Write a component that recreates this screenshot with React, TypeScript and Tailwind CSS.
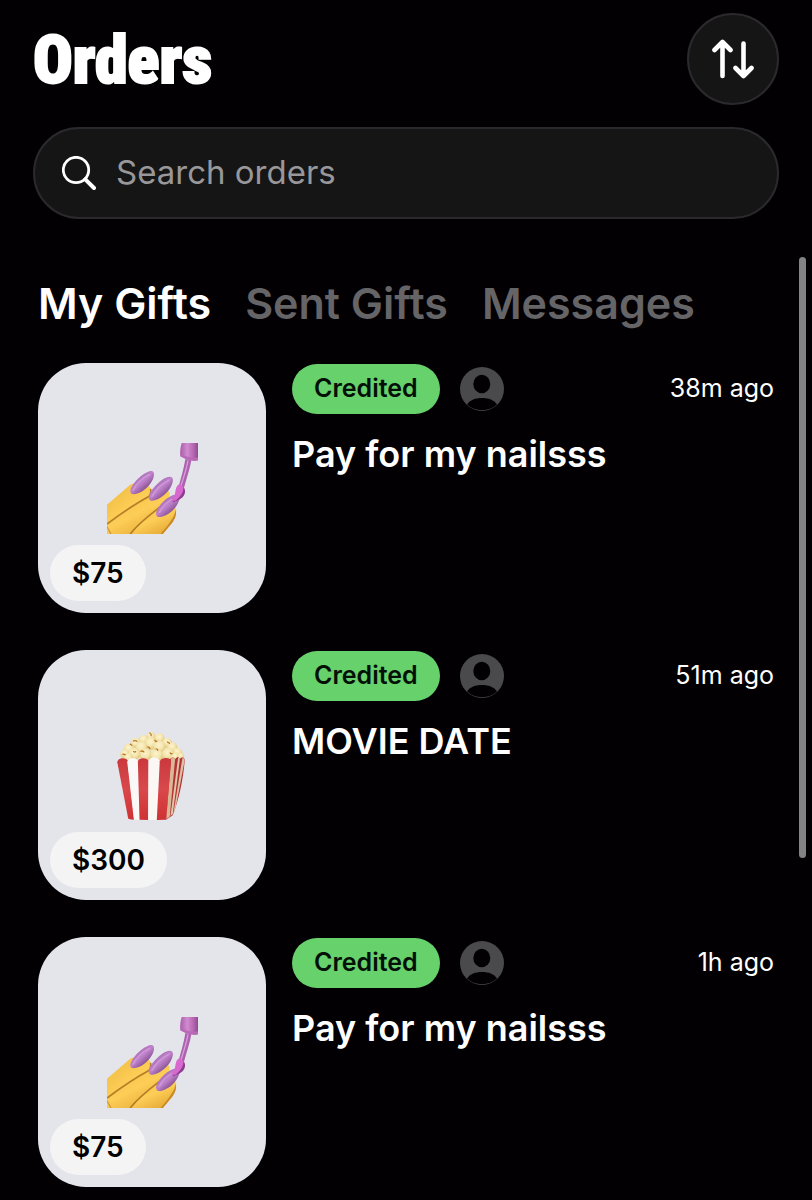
import { useState } from 'react'

type Order = {
  id: number
  title: string
  price: string
  time: string
  gift: 'nails' | 'popcorn'
}

const orders: Order[] = [
  { id: 1, title: 'Pay for my nailsss', price: '$75', time: '38m ago', gift: 'nails' },
  { id: 2, title: 'MOVIE DATE', price: '$300', time: '51m ago', gift: 'popcorn' },
  { id: 3, title: 'Pay for my nailsss', price: '$75', time: '1h ago', gift: 'nails' },
]

const tabs = ['My Gifts', 'Sent Gifts', 'Messages']

function SortIcon() {
  return (
    <svg
      viewBox="0 0 42 40"
      className="w-[42px] h-10"
      fill="none"
      stroke="currentColor"
      strokeWidth="4.6"
      strokeLinecap="round"
      strokeLinejoin="round"
      aria-hidden="true"
    >
      <path d="M10.500 37V3M2.500 11L10.500 3L18.500 11" />
      <path d="M31.500 4.500V37M23.500 29L31.500 37L39.500 29" />
    </svg>
  )
}

function SearchIcon() {
  return (
    <svg
      viewBox="0 0 34 34"
      className="w-[34px] h-[34px] shrink-0"
      fill="none"
      stroke="currentColor"
      strokeLinecap="round"
      aria-hidden="true"
    >
      <circle cx="14" cy="14" r="12.700" strokeWidth="2.800" />
      <path d="M23.300 23.300L32 32" strokeWidth="4" />
    </svg>
  )
}

function Avatar() {
  return (
    <svg viewBox="0 0 44 44" className="w-11 h-11 shrink-0" role="img" aria-label="Sender">
      <circle cx="22" cy="22" r="22" fill="#4a494c" />
      <ellipse cx="21.800" cy="17" rx="8.500" ry="9.200" fill="#020003" />
      <path d="M7 37.500C10 33 15.500 31 22 31S34 33 37 37.500C33 41.300 28 43.200 22 43.200S11 41.300 7 37.500Z" fill="#020003" />
    </svg>
  )
}

function NailsIcon() {
  return (
    <svg viewBox="48 42 274 274" className="w-[91px] h-[91px]" role="img" aria-label="Nail polish">
      <defs>
        <linearGradient id="skin" x1="0.200" y1="0.200" x2="0.700" y2="0.900">
          <stop offset="0" stopColor="#f3c148" />
          <stop offset="0.500" stopColor="#fdce57" />
          <stop offset="1" stopColor="#eab03c" />
        </linearGradient>
        <linearGradient id="nail" x1="0.250" y1="0.250" x2="0.750" y2="0.800">
          <stop offset="0" stopColor="#a96cb6" />
          <stop offset="0.450" stopColor="#bf82cb" />
          <stop offset="1" stopColor="#7a4585" />
        </linearGradient>
        <linearGradient id="cap" x1="0" y1="0" x2="1" y2="0">
          <stop offset="0" stopColor="#a95da8" />
          <stop offset="0.400" stopColor="#d18bd0" />
          <stop offset="0.750" stopColor="#b565b1" />
          <stop offset="1" stopColor="#8f4a90" />
        </linearGradient>
      </defs>
      {/* fingers */}
      <path d="M48 228L118 168C135 158 172 162 179 178C182 195 172 206 160 218L62 316H48Z" fill="url(#skin)" />
      <path d="M48 288L174 200C190 182 228 178 236 190C239 208 229 222 216 234L120 316H48Z" fill="url(#skin)" />
      <path d="M118 316L203 231C225 220 252 228 256 241C259 258 248 274 238 290L216 316Z" fill="url(#skin)" />
      <path d="M48 286C80 262 120 232 174 203C180 196 181 188 179 180" stroke="#a8701f" strokeWidth="5" fill="none" opacity="0.850" />
      <path d="M48 294L60 316" stroke="#b77920" strokeWidth="4" opacity="0.600" />
      <path d="M118 316C140 288 172 262 206 236" stroke="#a8701f" strokeWidth="5" fill="none" opacity="0.850" />
      <path d="M216 316L238 290C250 276 259 262 255 242C252 262 237 284 209 316Z" fill="#c98a25" />
      {/* nails */}
      <path d="M119 192C114 176 145 140 169 130C184 123 192 127 189 142C185 163 161 188 139 194C130 197 121 197 119 192Z" fill="url(#nail)" />
      <path d="M175 211C168 196 200 159 225 147C240 140 249 144 246 159C241 183 216 207 194 214C185 217 178 217 175 211Z" fill="url(#nail)" />
      <path d="M197 260C190 246 218 211 244 200C262 193 271 200 266 213C258 238 236 258 213 264C205 266 199 265 197 260Z" fill="url(#nail)" />
      <path d="M127 183C134 166 155 147 176 137" stroke="#d5a2dd" strokeWidth="5" fill="none" strokeLinecap="round" opacity="0.700" />
      <path d="M184 202C192 184 214 164 234 154" stroke="#d5a2dd" strokeWidth="5" fill="none" strokeLinecap="round" opacity="0.700" />
      <path d="M206 250C214 234 229 220 243 212" stroke="#d5a2dd" strokeWidth="5" fill="none" strokeLinecap="round" opacity="0.700" />
      {/* brush */}
      <path d="M266 170C280 170 288 185 280 199C275 208 267 211 258 216L245 221L258 188Z" fill="#8d3d91" />
      <path d="M284 90L302 94C297 122 287 150 279 180L264 172C271 147 279 120 284 90Z" fill="#ad62af" />
      <path d="M292 94C287 122 277 150 270 174" stroke="#d99edb" strokeWidth="4" fill="none" />
      <path d="M264 167C275 168 279 174 277 186C273 199 264 208 255 215L239 218C248 210 252 201 254 187C256 177 258 170 264 167Z" fill="#d968cf" />
      <path d="M273 42H322V94C305 98 285 92 269 82C267 68 269 54 273 42Z" fill="url(#cap)" />
      <path d="M269 82C285 92 305 98 322 94V86C302 88 285 83 269 74Z" fill="#b96ab6" />
    </svg>
  )
}

// [x, y, r] of each popped kernel, back row first
const kernels = [
  [150, 52, 13], [128, 62, 14], [176, 58, 15], [104, 72, 15], [199, 72, 15],
  [150, 74, 19], [84, 90, 16], [122, 86, 18], [176, 84, 19], [214, 86, 16],
  [230, 102, 15], [72, 106, 14], [100, 106, 19], [135, 108, 19], [168, 110, 20],
  [202, 106, 19], [224, 116, 15], [82, 116, 14], [240, 112, 10],
]

const kernelMarks = [
  'M147 42q5 3 4 8', 'M162 64q3 5 6 3', 'M88 76l5 3', 'M98 66q6-2 10 1',
  'M200 69l6 4', 'M98 98q4 3 6 0', 'M120 97q5-2 9 2', 'M166 90q4 0 5 4',
  'M66 106l7 1', 'M208 102q3 4 6 2', 'M141 84q5 1 6 5',
]

function PopcornIcon() {
  return (
    <svg viewBox="18 33 274 274" className="w-[91px] h-[91px]" role="img" aria-label="Popcorn">
      <defs>
        <linearGradient id="red" x1="0" y1="0" x2="0" y2="1">
          <stop offset="0" stopColor="#c9383c" />
          <stop offset="0.500" stopColor="#d9484b" />
          <stop offset="1" stopColor="#cf3234" />
        </linearGradient>
        <radialGradient id="kernel" cx="0.450" cy="0.350">
          <stop offset="0" stopColor="#fdf4cc" />
          <stop offset="0.700" stopColor="#f4e5ae" />
          <stop offset="1" stopColor="#e6d08a" />
        </radialGradient>
      </defs>
      {kernels.map(([x, y, r]) => (
        <circle key={`${x}-${y}`} cx={x} cy={y} r={r} fill="url(#kernel)" />
      ))}
      {kernelMarks.map((d) => (
        <path key={d} d={d} stroke="#b8782c" strokeWidth="4" fill="none" strokeLinecap="round" />
      ))}
      {/* right side of the box */}
      <path d="M207 124C211 114 219 114 223 121C229 113 235 114 237 121C243 113 252 115 252 125C247 185 235 240 216 290L196 303Z" fill="#b33134" />
      <path d="M211 119C216 115 220 116 223 122L207 294L196 302Z" fill="#d9b896" />
      <path d="M232 117C236 116 237 119 237 124L216 287L209 292Z" fill="#e0c4a7" />
      <path d="M245 117C250 117 252 121 251 128L225 266L218 284Z" fill="#ddc0a3" />
      {/* front stripes */}
      <path d="M49 130C50 115 75 115 80 124L100 303C94 303 88 302 82 300Z" fill="url(#red)" />
      <path d="M79 130C82 113 107 115 111 127L117 303H99Z" fill="#fbf8f8" />
      <path d="M111 128C113 115 141 115 143 128L142 304L116 303Z" fill="url(#red)" />
      <path d="M143 130C145 111 173 111 177 127L169 304H142Z" fill="#fbf7f4" />
      <path d="M177 127C181 114 210 114 211 126L196 303L168 304Z" fill="url(#red)" />
    </svg>
  )
}

function OrderCard({ order }: { order: Order }) {
  return (
    <li className="flex gap-[26px]">
      <div className="relative flex w-[228px] h-[250px] shrink-0 items-center justify-center rounded-[48px] bg-[#e4e5ea]">
        {order.gift === 'nails' ? <NailsIcon /> : <PopcornIcon />}
        <span className="absolute bottom-3 left-3 flex h-14 items-center rounded-full bg-[#f4f4f5] px-[22px] text-[28px] font-semibold text-black">
          {order.price}
        </span>
      </div>
      <div className="min-w-0 flex-1 pt-px">
        <div className="flex items-center">
          <span className="flex h-[50px] items-center rounded-full bg-[#67d16b] px-[22px] text-[25px] font-semibold text-[#041006]">
            Credited
          </span>
          <span className="ml-5">
            <Avatar />
          </span>
          <time className="ml-auto text-[25px]">{order.time}</time>
        </div>
        <h2 className="mt-4 text-[36px] leading-12 font-semibold">{order.title}</h2>
      </div>
    </li>
  )
}

export default function App() {
  const [active, setActive] = useState(tabs[0])
  const [query, setQuery] = useState('')

  return (
    <div className="relative min-h-screen bg-[#020003] pt-[13px] pb-3 font-['Inter',sans-serif] text-white">
      <header className="px-[33px]">
        <div className="flex items-center justify-between">
          <h1 className="pt-1 font-['Roboto_Condensed','Roboto',sans-serif] text-[66px] leading-none font-black [-webkit-text-stroke:2px_white]">
            Orders
          </h1>
          <button
            type="button"
            aria-label="Sort orders"
            className="flex size-[92px] items-center justify-center rounded-full border-2 border-[#2b292d] bg-[#151515]"
          >
            <SortIcon />
          </button>
        </div>
        <label className="mt-[22px] flex h-[92px] items-center gap-5 rounded-full border-2 border-[#2b292d] bg-[#151515] px-[27px]">
          <SearchIcon />
          <input
            type="text"
            aria-label="Search orders"
            placeholder="Search orders"
            value={query}
            onChange={(e) => setQuery(e.target.value)}
            className="min-w-0 flex-1 bg-transparent text-[33px] outline-none placeholder:text-[#98979a]"
          />
        </label>
      </header>

      <main className="px-[38px] pt-14">
        <nav className="flex gap-[34px]">
          {tabs.map((tab) => (
            <button
              key={tab}
              type="button"
              onClick={() => setActive(tab)}
              className={`text-[43px] leading-14 font-semibold ${
                tab === active ? 'text-white' : 'text-[#656467]'
              }`}
            >
              {tab}
            </button>
          ))}
        </nav>
        <ul className="mt-8 flex flex-col gap-[37px]">
          {orders.map((order) => (
            <OrderCard key={order.id} order={order} />
          ))}
        </ul>
      </main>

      {/* scroll indicator */}
      <div className="absolute top-[257px] right-1.5 h-[601px] w-[7px] rounded-full bg-[#838284]" />
    </div>
  )
}
